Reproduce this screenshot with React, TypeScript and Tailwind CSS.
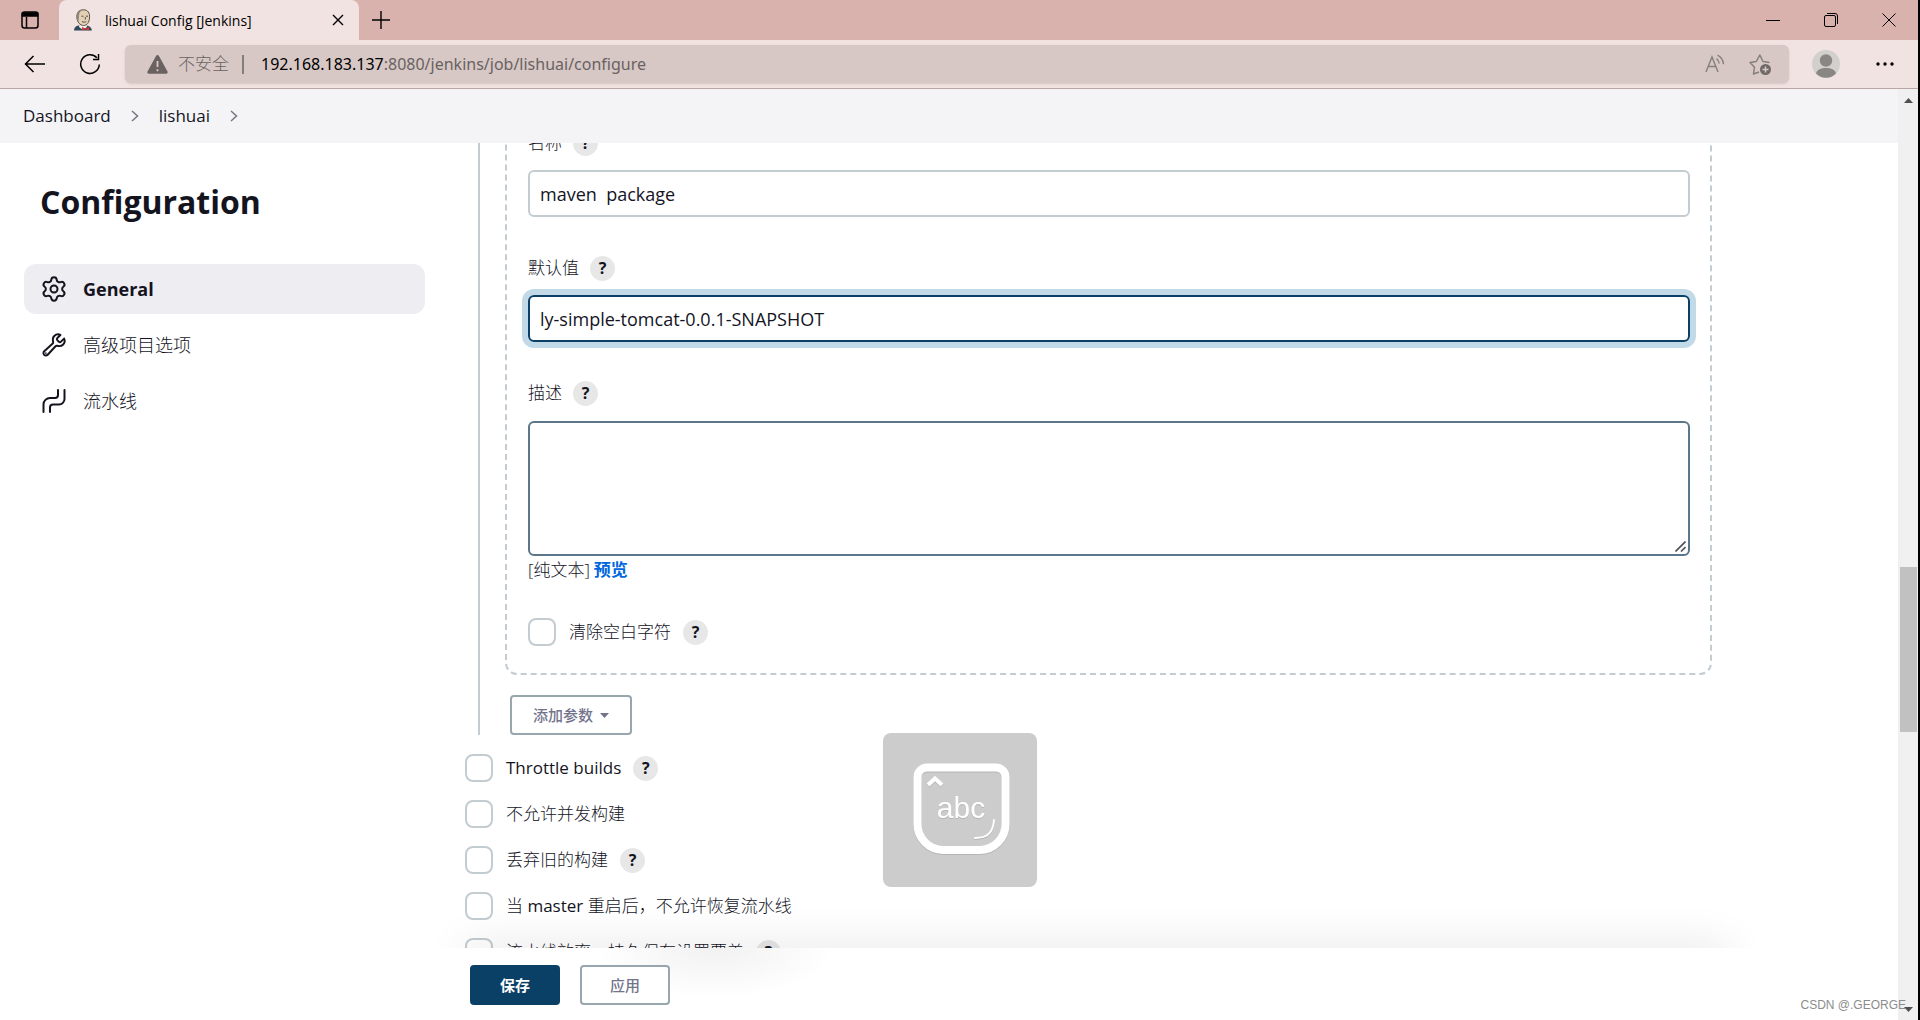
import React from 'react';
import { Settings } from 'lucide-react';
import { IoBuildOutline } from 'react-icons/io5';

const sideItems = [
  { label: 'General', icon: 'gear', active: true },
  { label: '高级项目选项', icon: 'wrench', active: false },
  { label: '流水线', icon: 'pipeline', active: false }
];

const options = [
  { id: 'throttle', label: <span className="font-normal">Throttle builds</span>, help: true },
  { id: 'concurrent', label: '不允许并发构建', help: false },
  { id: 'discard', label: '丢弃旧的构建', help: true },
  { id: 'resume', label: <>当 <span className="font-normal">master</span> 重启后，不允许恢复流水线</>, help: false },
  { id: 'durability', label: '流水线效率、持久保存设置覆盖', help: true }
];

function JenkinsIcon() {
  return (
    <svg width="20" height="22" viewBox="0 0 20 22" className="shrink-0">
      <path d="M1 21.500c0-3 2-4.500 4.500-5h8c3 .5 5 2 5.500 5z" fill="#2f4a5c" />
      <path d="M7 14h6l1 4-4 3-4-3z" fill="#f3f0ea" />
      <path d="M4 9C3.500 3.500 6 .8 10.500.8S17 4 16.500 9c-.3 4.500-2.500 7.500-6 7.500S4.300 13 4 9z" fill="#e3cfb4" stroke="#4a4038" strokeWidth=".9" />
      <path d="M4 11C2.500 6 4 1.200 9 .8 6.500 3 6 5 6 7.500L5.500 12z" fill="#8b857b" />
      <path d="M8.500 7.200h2M13 7.200h2M9 12.500c1.500.9 3 .9 4.300 0M12.300 8v2.500" stroke="#4a4038" strokeWidth=".9" fill="none" />
      <path d="M9 18l3.500 1.500L16 18v3.500l-3.500-1.200L9 21.500z" fill="#d33833" />
    </svg>
  );
}

function PipelineIcon() {
  return (
    <svg width="26" height="26" viewBox="0 0 26 26" fill="none" stroke="currentColor" strokeWidth="2" strokeLinecap="round">
      <path d="M17 2v5a3 3 0 0 1-3 3H9a6.500 6.500 0 0 0-6.500 6.500V24" />
      <path d="M23.500 2v9a5.500 5.500 0 0 1-5.500 5.500h-6a3 3 0 0 0-3 3V24" />
    </svg>
  );
}

function SideIcon({ name }: { name: string }) {
  if (name === 'gear') return <Settings size={28} strokeWidth={1.7} className="-mx-px" />;
  if (name === 'wrench') return <IoBuildOutline size={26} className="[&_path]:stroke-[38px]" />;
  return <PipelineIcon />;
}

function Help() {
  return (
    <button
      type="button"
      aria-label="帮助"
      className="flex h-[25px] w-[25px] shrink-0 items-center justify-center rounded-full bg-[#e7e7e7] text-[16px] leading-none font-bold"
    >
      ?
    </button>
  );
}

function FieldLabel({ htmlFor, text }: { htmlFor: string; text: string }) {
  return (
    <div className="flex h-[26px] items-center gap-[11px]">
      <label htmlFor={htmlFor} className="text-[17px] font-light">{text}</label>
      <Help />
    </div>
  );
}

function CheckRow({ id, label, help }: { id: string; label: React.ReactNode; help: boolean }) {
  return (
    <div className="flex h-7 items-center">
      <input id={id} type="checkbox" className="h-7 w-7 shrink-0 appearance-none rounded-lg border-2 border-[#c3ccd1] bg-white" />
      <label htmlFor={id} className="ml-[13px] mr-3 text-[17px] font-light whitespace-nowrap">{label}</label>
      {help && <Help />}
    </div>
  );
}

function TabBar() {
  return (
    <div className="flex h-10 items-stretch bg-[#d9b2ad] text-black">
      <button type="button" aria-label="Tab actions" className="flex w-[59px] items-center justify-center">
        <svg width="18" height="18" viewBox="0 0 18 18" fill="none" stroke="currentColor" strokeWidth="1.500">
          <rect x="1" y="1" width="16" height="16" rx="2.500" />
          <path d="M1.500 2h15v3h-15z" fill="currentColor" />
          <path d="M5.500 6v11" />
        </svg>
      </button>
      <div className="flex w-[300px] items-center rounded-t-lg bg-[#f1e3e1] pl-[14px] pr-[15px]">
        <JenkinsIcon />
        <span className="ml-3 flex-1 text-[14px]">lishuai Config [Jenkins]</span>
        <button type="button" aria-label="Close tab">
          <svg width="12" height="12" viewBox="0 0 12 12" stroke="currentColor" strokeWidth="1.400"><path d="M1 1l10 10M11 1L1 11" /></svg>
        </button>
      </div>
      <button type="button" aria-label="New tab" className="ml-[13px]">
        <svg width="18" height="18" viewBox="0 0 18 18" stroke="currentColor" strokeWidth="1.400"><path d="M9 0v18M0 9h18" /></svg>
      </button>
      <div className="ml-auto flex items-center gap-11 pr-[22px]">
        <button type="button" aria-label="Minimize">
          <svg width="14" height="14" viewBox="0 0 14 14" stroke="currentColor"><path d="M0 7.500h14" /></svg>
        </button>
        <button type="button" aria-label="Restore">
          <svg width="14" height="14" viewBox="0 0 14 14" fill="none" stroke="currentColor">
            <rect x=".5" y="2.500" width="11" height="11" rx="1.500" />
            <path d="M3 .5h8a2.500 2.500 0 0 1 2.500 2.500v8" />
          </svg>
        </button>
        <button type="button" aria-label="Close">
          <svg width="14" height="14" viewBox="0 0 14 14" stroke="currentColor"><path d="M.5.500l13 13M13.500.500l-13 13" /></svg>
        </button>
      </div>
    </div>
  );
}

function AddressBar() {
  return (
    <div className="flex h-[49px] items-center border-b border-[#b9a5a5] bg-[#f1e3e1] pr-6 text-black">
      <button type="button" aria-label="Back" className="ml-6">
        <svg width="22" height="18" viewBox="0 0 22 18" fill="none" stroke="currentColor" strokeWidth="1.500"><path d="M21 9H1.500M9.500 1l-8 8 8 8" /></svg>
      </button>
      <button type="button" aria-label="Refresh" className="ml-[33px]">
        <svg width="22" height="22" viewBox="0 0 22 22" fill="none" stroke="currentColor" strokeWidth="1.500">
          <path d="M20.300 11.500A9.300 9.300 0 1 1 17.800 4.700M19.500 1v5.500H14" />
        </svg>
      </button>
      <div className="ml-6 flex h-[38px] flex-1 items-center rounded-md bg-[#d7c8c6] pl-[22px] pr-4 text-[#6a6261] shadow-sm">
        <svg width="21" height="19" viewBox="0 0 21 19">
          <path d="M9 1a1.700 1.700 0 0 1 3 0l8.500 15.500a1.500 1.500 0 0 1-1.300 2.200H1.800A1.500 1.500 0 0 1 .5 16.500z" fill="#6a6261" />
          <path d="M10.500 6v6M10.500 14.200v2" stroke="#d7c8c6" strokeWidth="1.800" />
        </svg>
        <span className="ml-[10px] text-[17px] font-light">不安全</span>
        <span className="mx-[13px] h-[19px] w-[2px] bg-[#857c7b]" />
        <span className="flex-1 pl-1 font-['Noto_Sans',sans-serif] text-[16px]"><span className="text-black">192.168.183.137</span>:8080/jenkins/job/lishuai/configure</span>
        <button type="button" aria-label="Read aloud" className="mr-6">
          <svg width="20" height="20" viewBox="0 0 20 20" fill="none" stroke="#857f7d" strokeWidth="1.400">
            <path d="M1 18L7 3l6 15M3.200 12.500h7.600M11.500 4.500a8 8 0 0 1 2.800 5M12.500 1.200a11 11 0 0 1 6 9" />
          </svg>
        </button>
        <button type="button" aria-label="Add to favorites">
          <svg width="24" height="24" viewBox="0 0 24 24" fill="none" stroke="#857f7d" strokeWidth="1.500" strokeLinejoin="round">
            <path d="M10 20l-5.500 2 1-6.800L1 10.500l6.300-1L10.800 3l3.200 6.500 6.500 1" />
            <circle cx="16.500" cy="17.500" r="5.500" fill="#6f6a68" stroke="none" />
            <path d="M16.500 14.500v6M13.500 17.500h6" stroke="#d7c8c6" />
          </svg>
        </button>
      </div>
      <button type="button" aria-label="Profile" className="ml-[23px]">
        <svg width="28" height="28" viewBox="0 0 28 28">
          <circle cx="14" cy="14" r="14" fill="#d2d0cd" />
          <circle cx="14" cy="10.500" r="6.200" fill="#8a8683" />
          <path d="M4 23.500c1-4 5-5.500 10-5.500s9 1.500 10 5.500A14 14 0 0 1 4 23.500z" fill="#8a8683" />
        </svg>
      </button>
      <button type="button" aria-label="Settings and more" className="ml-9">
        <svg width="18" height="4" viewBox="0 0 18 4"><circle cx="2" cy="2" r="1.700" /><circle cx="9" cy="2" r="1.700" /><circle cx="16" cy="2" r="1.700" /></svg>
      </button>
    </div>
  );
}

function Chevron() {
  return (
    <svg width="8" height="12" viewBox="0 0 8 12" fill="none" stroke="#77777f" strokeWidth="1.500"><path d="M1 1l5.500 5L1 11" /></svg>
  );
}

function Scrollbar() {
  return (
    <div className="flex w-5 shrink-0 flex-col items-center bg-[#f0f0f0] pt-[9px] pb-2">
      <svg width="9" height="5" viewBox="0 0 9 5"><path d="M0 5L4.500 0 9 5z" fill="#505050" /></svg>
      <div className="grow-[464]" />
      <div className="h-[165px] w-[17px] bg-[#c1c1c1]" />
      <div className="grow-[275]" />
      <svg width="9" height="5" viewBox="0 0 9 5"><path d="M0 0h9L4.500 5z" fill="#505050" /></svg>
    </div>
  );
}

function ImeIndicator() {
  return (
    <div className="absolute left-[883px] top-[733px] h-[154px] w-[154px] rounded-lg bg-[#ccc]">
      <svg width="154" height="154" viewBox="0 0 154 154" fill="none" stroke="#fff" strokeLinecap="round" className="drop-shadow-[0_1px_0_#b4b4b4]">
        <path d="M44 34.500h69a9.500 9.500 0 0 1 9.500 9.500v47a26 26 0 0 1-26 26H60a26 26 0 0 1-25.500-26V44a9.500 9.500 0 0 1 9.500-9.500z" strokeWidth="8" />
        <path d="M45 52l7-6.500 7 6.500" strokeWidth="4" strokeLinecap="butt" />
        <path d="M92 105c12 0 18-5 19-18" strokeWidth="2" />
        <text x="78" y="85" textAnchor="middle" fill="#fff" stroke="none" fontSize="30" fontFamily="Liberation Sans, sans-serif">abc</text>
      </svg>
    </div>
  );
}

export default function App() {
  return (
    <div className="relative flex h-screen flex-col overflow-hidden border-r-2 border-black bg-white font-['Open_Sans','Noto_Sans_CJK_SC',sans-serif] text-[#14141f]">
      <TabBar />
      <AddressBar />
      <div className="flex min-h-0 flex-1">
        <div className="flex min-w-0 flex-1 flex-col">
          <nav className="flex h-[54px] shrink-0 items-center bg-[#f4f4f7] pl-[23px] text-[17px]">
            <a href="#dashboard">Dashboard</a>
            <span className="mx-5"><Chevron /></span>
            <a href="#lishuai">lishuai</a>
            <span className="ml-5"><Chevron /></span>
          </nav>

          <div className="flex min-h-0 flex-1">
            <aside className="w-[425px] shrink-0 pl-6 pt-9">
              <h1 className="pl-4 text-[32px] leading-[46px] font-bold">Configuration</h1>
              <ul className="mt-[39px] flex flex-col gap-[6px]">
                {sideItems.map((item) => (
                  <li key={item.label}>
                    <a
                      href={`#${item.icon}`}
                      className={`flex h-[50px] items-center gap-4 rounded-xl pl-[17px] text-[18px] ${item.active ? 'bg-[#eeedf2] font-bold' : 'font-light'}`}
                    >
                      <SideIcon name={item.icon} />
                      {item.label}
                    </a>
                  </li>
                ))}
              </ul>
            </aside>

            <form className="flex min-w-0 flex-1 flex-col">
              <div className="relative min-h-0 flex-1 overflow-hidden pl-10">
                <div className="max-w-[1247px]">
                  <div className="ml-[13px] border-l-2 border-[#c3ccd1]">
                    {/* parameter block, scrolled partly under the breadcrumb */}
                    <div className="-mt-7 ml-[25px] rounded-xl border-2 border-dashed border-[#c3ccd1] pb-[27px] pl-[21px] pr-5 pt-[13px]">
                      <FieldLabel htmlFor="name" text="名称" />
                      <input
                        id="name"
                        type="text"
                        defaultValue="maven  package"
                        className="mt-[14px] block h-[47px] w-full rounded-md border-2 border-[#c3ccd1] px-[10px] text-[18px]"
                      />
                      <div className="mt-[38px]"><FieldLabel htmlFor="default" text="默认值" /></div>
                      <input
                        id="default"
                        type="text"
                        defaultValue="ly-simple-tomcat-0.0.1-SNAPSHOT"
                        className="mt-[14px] block h-[47px] w-full rounded-md border-2 border-[#0b4066] px-[10px] text-[18px] shadow-[0_0_0_6px_#c2d9e7] outline-none"
                      />
                      <div className="mt-[38px]"><FieldLabel htmlFor="desc" text="描述" /></div>
                      <div className="relative mt-[15px]">
                        <textarea id="desc" className="block h-[135px] w-full resize-none rounded-md border-2 border-[#5b7789]" />
                        <svg width="11" height="11" viewBox="0 0 11 11" stroke="#505058" strokeWidth="1.600" className="absolute bottom-1 right-1">
                          <path d="M.5 10.500l10-10M6 10.500l4.500-4.500" />
                        </svg>
                      </div>
                      <div className="flex h-7 items-center gap-1 text-[17px] font-light">
                        <span>[纯文本]</span>
                        <a href="#preview" className="font-bold text-[#0066dd]">预览</a>
                      </div>
                      <div className="mt-[34px]"><CheckRow id="trim" label="清除空白字符" help /></div>
                    </div>
                    <button
                      type="button"
                      className="ml-[30px] mt-5 flex h-10 items-center gap-[7px] rounded border-2 border-[#98a6af] px-[21px] text-[15px] font-medium text-[#73738c]"
                    >
                      添加参数
                      <svg width="9" height="5" viewBox="0 0 9 5"><path d="M0 0h9L4.500 5z" fill="currentColor" /></svg>
                    </button>
                  </div>
                  <div className="mt-[19px] flex flex-col gap-[18px]">
                    {options.map((o) => (
                      <CheckRow key={o.id} {...o} />
                    ))}
                  </div>
                </div>
                <div className="absolute bottom-[-20px] left-10 right-[170px] h-5 shadow-[0_0_44px_rgba(0,0,0,0.14)]" />
              </div>

              <div className="flex h-[72px] shrink-0 items-start gap-5 bg-[radial-gradient(ellipse_120px_50px_at_290px_0px,#f1f1f1,#ffffff)] pl-[45px] pt-[17px]">
                <button type="submit" className="h-10 w-[90px] rounded bg-[#0b4066] text-[15px] font-bold text-white">保存</button>
                <button type="button" className="h-10 w-[90px] rounded border-2 border-[#98a6af] bg-white text-[15px] font-medium text-[#73738c]">应用</button>
              </div>
            </form>
          </div>
        </div>
        <Scrollbar />
      </div>
      <ImeIndicator />
      <span className="absolute bottom-[6px] right-3 font-['Liberation_Sans',sans-serif] text-[12px] text-[#8c8c8c]">CSDN @.GEORGE</span>
    </div>
  );
}
